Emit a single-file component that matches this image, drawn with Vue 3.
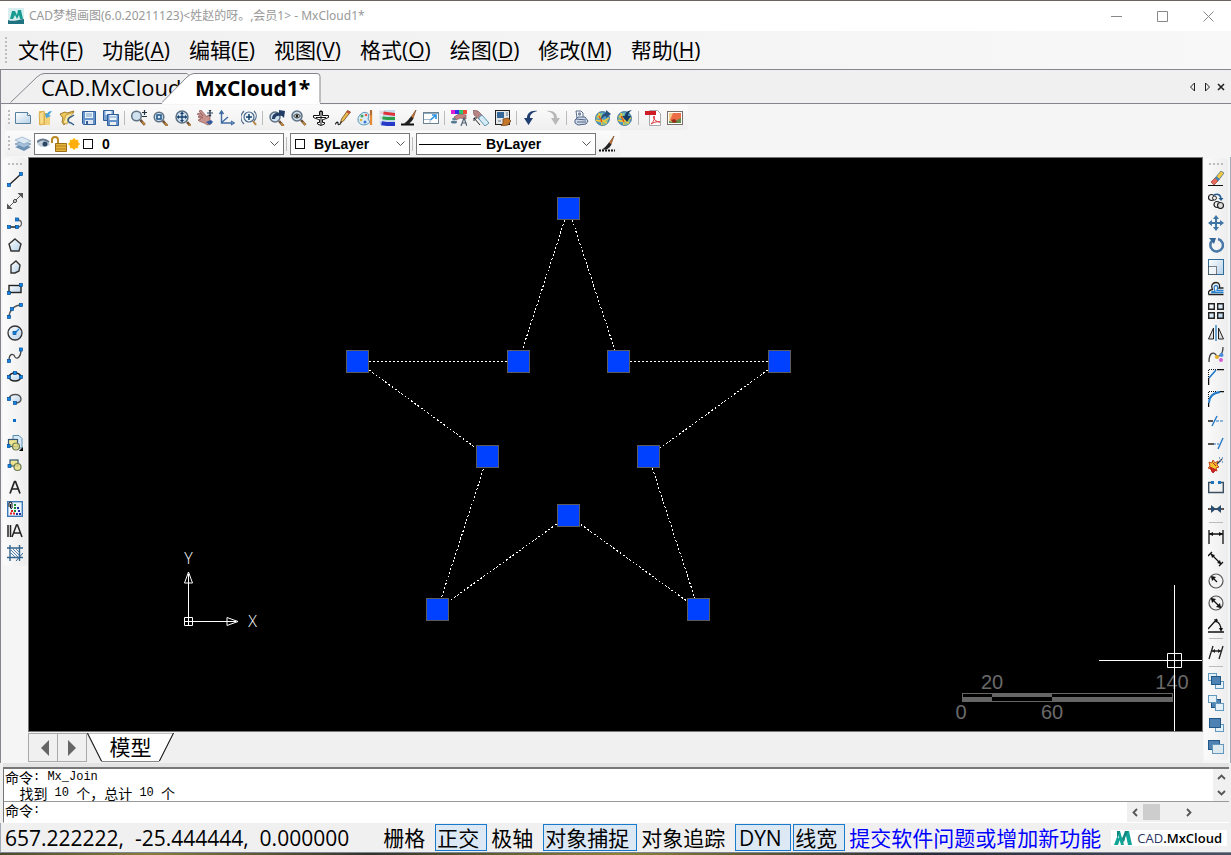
<script setup>
const menus = [
  ['文件', 'F'], ['功能', 'A'], ['编辑', 'E'], ['视图', 'V'],
  ['格式', 'O'], ['绘图', 'D'], ['修改', 'M'], ['帮助', 'H'],
]

const lens = (x, y, r) =>
  `<path d="M${x + r - 1} ${y + r - 1}l4.500 5" stroke="#6b5138" stroke-width="2.600"/><path d="M${x + r + 1} ${y + r + 1}l2.500 3" stroke="#c58a3d" stroke-width="1.600"/><circle cx="${x}" cy="${y}" r="${r}" fill="#cfe0ee" stroke="#5e7183" stroke-width="1.500"/>`
const dot = (x, y) => `<rect x="${x - 1.5}" y="${y - 1.5}" width="3" height="3" fill="#1188e6" stroke="#034b94" stroke-width=".7"/>`
const brush = '<path d="M15 0l-5 7 2 1.500z" fill="#d77a35" stroke="#623413" stroke-width=".6"/><path d="M10 6.500l2.500 2-2 3-6 2 3-4z" fill="#222"/>'
const globe =
  '<circle cx="7.500" cy="8.500" r="7" fill="#4d9bc9" stroke="#285a7b" stroke-width=".7"/><path d="M1 8c2-5 5-5 7-5l-2 5-3 1zM8 10l5-1c0 4-2 6-5 6z" fill="#8fc08a"/><path d="M2 6c3 1 5 5 5 9M1 10c4 2 9 1 13-2M4 3c0 5 4 9 8 10" stroke="#f4cb35" stroke-width="1.500" fill="none"/><path d="M4 6l3 6" stroke="#d74822" stroke-width="1.200"/>'
const back = (x, y) => `<rect x="${x}" y="${y}" width="8" height="7" fill="#e5f1f8" stroke="#6497bc"/>`
const front = (x, y, w = 9, h = 8) => `<rect x="${x}" y="${y}" width="${w}" height="${h}" fill="#4d82b3" stroke="#205887"/>`

const icons = {
  new: '<path d="M.5 2.500h12l3 3v8H.5z" fill="url(#paper)" stroke="#56809e"/><path d="M12.500 2.500v3h3" fill="#fff" stroke="#56809e"/>',
  open: '<path d="M2 1h5l1 2h3v12H2z" fill="#e9bc55"/><path d="M2 3l5-2v13l-4 1z" fill="#f8dc8c" stroke="#c79432" stroke-width=".6"/><path d="M8 6h5v9H8z" fill="#f1d17b"/><path d="M15 1c-3 0-4 1-5 3L8 3l1 5 5-2-2-1z" fill="#4aa4dc"/>',
  openlib: '<path d="M1 4l5-2 2 1 7-2-3 4-4 4-3 6-2-3 1-4z" fill="#efc85c" stroke="#a07928"/><path d="M4 13l3-8 8-3-4 5-3 7z" fill="#f9e59c" stroke="#b98e33" stroke-width=".8"/><path d="M12 7c-4 1-4 5 0 6l3 2M12 7l3-2" fill="none" stroke="#365f8b" stroke-width="1.500"/>',
  save: '<path d="M1.500 1.500h13v13h-12l-1-1z" fill="#6793cb" stroke="#2f5d98"/><rect x="4" y="2" width="8" height="6" fill="#e8f2fa"/><path d="M5 4h6M5 6h6" stroke="#78a0c8"/><rect x="4" y="10" width="8" height="4" fill="#dfe8f2"/><rect x="5" y="11" width="2" height="3" fill="#375f94"/>',
  saveall: '<path d="M.5.500h10v10H.5z" fill="#7aa2d2" stroke="#2f5d98"/><rect x="2.500" y="1" width="6" height="4" fill="#eaf4fc"/><path d="M4.500 4.500h11v11h-11z" fill="#6793cb" stroke="#2f5d98"/><rect x="6.500" y="5" width="7" height="5" fill="#eaf4fc"/><path d="M7 7h6" stroke="#6f9bca"/><rect x="7" y="12" width="6" height="3" fill="#eee"/>',
  zoom: lens(5.5, 6, 4.8) + '<path d="M13.500 0v5M11 2.500h5M11 6.500h5" stroke="#234" stroke-width="1.200"/>',
  zoomwin: lens(6, 7, 4.8) + '<rect x="4" y="5" width="4" height="4" fill="#dceaf5" stroke="#1e548a" stroke-width="1.500"/>',
  zoomext: lens(7, 7, 6) + '<path d="M7 3v8M3 7h8" stroke="#173f6b" stroke-width="1.300"/><path d="M7 1.500l2 2.500H5zM7 12.500L5 10h4zM1.500 7L4 5v4zM12.500 7L10 9V5z" fill="#173f6b"/>',
  pan: '<path d="M0 4l3-1 3 3-4-5 2-1 6 7 1-2 2 1v5l2 2-4 2-4-2-5-2-1-1 3-1-3-2 1-1 4 2z" fill="#c9928d" stroke="#8a5553" stroke-width=".7"/><path d="M9 12l5-2 2 2-3 3z" fill="#345b9b"/><path d="M13 0v6M10 3h6M12 1l1-1 1 1M12 5l1 1 1-1" stroke="#263b52" stroke-width="1.200" fill="none"/>',
  ucs: '<path d="M2.500 2v11H13M.5 4l2-3 2 3M12 11l3 2-3 2M2 13L9 7" fill="none" stroke="#3e6ba1" stroke-width="1.400"/>',
  zoomreal: '<circle cx="8" cy="7" r="5" fill="#edf5fb" stroke="#48698c" stroke-width="1.200"/><path d="M8 4v6M5 7h6" stroke="#153f69" stroke-width="1.500"/><path d="M3 1C-1 5-1 10 3 14M13 1c3 3 3 7 0 10" stroke="#536f8b" stroke-width="1.200" fill="none"/><path d="M12 11l3 4" stroke="#b68548" stroke-width="2"/>',
  zoomprev: lens(6, 7, 5) + '<path d="M3 9C3 4 7 2 10 3V0l6 1-1 7-2-2C9 5 6 6 6 9z" fill="#223e64"/>',
  zoomall: lens(6, 6, 5) + '<path d="M2.500 6Q6 2 9.500 6 6 10 2.500 6z" fill="#fff" stroke="#333"/><circle cx="6" cy="6" r="1.500" fill="#222"/>',
  plane: '<path d="M6.500 1.500h3v4h6v2l-5 2h-1v3h2v1.500l-3.500 1.500-3.500-1.500V12.500h2v-3h-1l-5-2v-2h6z" fill="#fff" stroke="#111"/><path d="M8 0v15M3 7.500h10" stroke="#111"/>',
  pencil: '<path d="M12.500.500l3 1.500-7 9-3 2 1-4z" fill="#e7b84b" stroke="#6f4b22" stroke-width=".8"/><path d="M0 14.500c2-3 3-3 3-1s1 1 3 0" stroke="#222" stroke-width="1.200" fill="none"/><path d="M12.500.500l3 1.500-1.500 2-2.500-2z" fill="#c14c36"/><path d="M6 11l-1 2.500 2-1.500z" fill="#222"/>',
  palette: '<path d="M3 5c3-4 8-3 9 0l-1 4 2 3c-4 5-12 3-12-2 0-2 0-3 2-5z" fill="#d9ecfa" stroke="#5793b8"/><circle cx="5" cy="6" r="1.500" fill="#43a357"/><circle cx="9" cy="5" r="1.300" fill="#e55b44"/><circle cx="4" cy="10" r="1.300" fill="#e4b638"/><circle cx="8" cy="12" r="1.500" fill="#3e77cc"/><path d="M14 1v14" stroke="#e58b38" stroke-width="2.300"/><path d="M13 0h2v5h-2z" fill="#b16c36"/>',
  layersrgb: '<path d="M0 0h16v16H0z" fill="#c6dbea"/><path d="M1 1l7 1 8 1v3L8 5 1 4z" fill="#e1323a"/><path d="M1 6l7 1h8v3H8L1 9z" fill="#2b9c47"/><path d="M1 11l7 1h8v4H8l-7-1z" fill="#2538c8"/><path d="M0 0h5L2 16H0z" fill="#eef5fa" fill-opacity=".8"/>',
  brushline: brush + '<path d="M0 14.500h13" stroke="#111" stroke-width="2"/><path d="M3 13.500l4-3 3 1-2 3z" fill="#222"/>',
  resize: '<rect x=".5" y="2.500" width="15" height="11" fill="#fff" stroke="#6b8293"/><path d="M1 3.500h14" stroke="#91aabd"/><path d="M1 9.500h6V13" fill="none" stroke="#a0b9cb"/><path d="M7.500 10L13 5M9 5h4v4" stroke="#2792df" stroke-width="1.600" fill="none"/>',
  colorfont: '<rect x="0" y="0" width="4" height="4" fill="#e11bd0"/><rect x="4" y="0" width="4" height="4" fill="#352bec"/><rect x="8" y="0" width="4" height="4" fill="#28c76d"/><rect x="12" y="0" width="4" height="4" fill="#ec4936"/><path d="M3 7l5-3 7 1v4L9 8l-4 2z" fill="#c98481" stroke="#68474b" stroke-width=".6"/><ellipse cx="3" cy="9" rx="2" ry="1" fill="#547b91"/><ellipse cx="3" cy="12" rx="3" ry="1.500" fill="#547b91"/><path d="M10 16l3-8 3 8M11 13h4" fill="none" stroke="#526174" stroke-width="1.200"/>',
  hand: '<path d="M0 0l5 1 5 5-3 4-6-5z" fill="#b78583" stroke="#704f50" stroke-width=".6"/><path d="M6 7l3-2 7 8-4 3-6-7z" fill="#d5ecf6" stroke="#6192ae"/><path d="M1 8l6 7M1 11V8h3" fill="none" stroke="#222"/>',
  props: '<rect x=".5" y=".5" width="14" height="14" fill="#e5e6e8" stroke="#222"/><rect x="2" y="2" width="7" height="6" fill="#356898"/><path d="M11 3h2M11 5h2M3 11h3" stroke="#607b92"/><path d="M8 9l5-1 3 3-3 4-7 1 2-3z" fill="#c57629" stroke="#633e1c" stroke-width=".7"/>',
  undo: '<path d="M14.500 1C7 0 4 4 4 8H1l4.500 7L10 8H7c0-4 3-6 7.500-7z" fill="#203e70"/>',
  redo: '<path d="M1.500 1C9 0 12 4 12 8h3l-4.500 7L6 8h3C9 4 6 2 1.500 1z" fill="#b8b8b8"/>',
  print: '<path d="M4 8L3 1h5l2 2v5" fill="#fff" stroke="#566987"/><path d="M2 10l3-3h7l3 4-2 3-8 1-3-2z" fill="#d3dcec" stroke="#4f6283"/><path d="M3 9l10 1M4 12l9 0" fill="none" stroke="#4f6283"/><circle cx="6.500" cy="4" r="1.700" fill="#758aab"/>',
  web: globe + '<path d="M6 10c0-5 3-7 5-7V0l5 4-5 4V6c-2 0-3 1-5 4z" fill="#28527d"/>',
  webdown: globe + '<path d="M15 0c-6 1-7 4-7 6H5l5 6 4-6h-3c0-2 1-4 4-6z" fill="#173d65"/>',
  pdf: '<path d="M4.500.500h8l3 3v12h-11z" fill="#fff" stroke="#aaa"/><rect x="0" y="1" width="11" height="4" fill="#cf1c25"/><path d="M6 14c4-4 4-7 3-8-2 3 3 6 6 6-4-1-7 1-9 2z" fill="none" stroke="#d9343a"/>',
  image: '<rect x=".5" y="1.500" width="15" height="13" fill="#fff" stroke="#776f68"/><rect x="2" y="3" width="12" height="10" fill="#f0cf8c"/><path d="M6 3h8v6l-7 3-4-2z" fill="#ec6f47"/><path d="M2 11l4 1 8-4v5H2z" fill="#628e49"/><path d="M4 10l4-1 2 3-4 1z" fill="#9c291e"/>',
  layers: '<path d="M0 11l7-3 9 3-7 4z" fill="#6c91b5"/><path d="M0 8l7-3 9 3-7 4z" fill="#a4bfd8" stroke="#587da1" stroke-width=".6"/><path d="M0 4l7-3 9 4-7 3z" fill="#dce8f2" stroke="#7f9fbd" stroke-width=".6"/>',
  brushdot: brush + '<path d="M3 13.500l4-3 3 1-2 2z" fill="#222"/><path d="M0 14.500h16" stroke="#111" stroke-width="2" stroke-dasharray="2 1"/>',

  line: '<path d="M2 14L14 3" stroke="#222" stroke-width="1.400"/>' + dot(2, 14) + dot(14, 3),
  xline: '<path d="M2 14L14 2" stroke="#555" fill="none"/><path d="M0 10.500V16h5.500zM10.500 0H16v5.500z" fill="#555"/><circle cx="8" cy="8" r="1.500" fill="#fff" stroke="#333"/>',
  pline: '<path d="M1 12h10" stroke="#111" stroke-width="1.400"/><path d="M10 12c6 0 6-7 0-7" stroke="#666" stroke-width="1.300" fill="none"/>' + dot(2, 12) + dot(10, 12) + dot(10, 4.5),
  polygon: '<path d="M8 2l6 5-2 7H4L2 7z" fill="url(#paper)" stroke="#333" stroke-width="1.400"/>',
  polygon2: '<path d="M9 2l4 4-1 6-4 2H4V6z" fill="url(#paper)" stroke="#333" stroke-width="1.400"/>',
  rect: '<rect x="2" y="4.500" width="12" height="7" fill="url(#paper)" stroke="#222" stroke-width="1.400"/>' + dot(2, 12) + dot(14, 4),
  arc: '<path d="M2 14C2 8 7 2 14 2" fill="none" stroke="#555" stroke-width="1.400"/>' + dot(2, 14) + dot(5, 6) + dot(14, 2),
  circle: '<circle cx="8" cy="8" r="7" fill="url(#paper)" stroke="#333" stroke-width="1.300"/><path d="M8 8l4-4" stroke="#1681d6" stroke-width="1.300"/>' + dot(7.5, 8),
  spline: '<path d="M2 14c0-9 5-7 6-4 2 3 6 0 6-7" fill="none" stroke="#444" stroke-width="1.300"/>' + dot(2, 14) + dot(14, 2.5),
  ellipse: '<ellipse cx="8" cy="8" rx="6" ry="4" fill="url(#paper)" stroke="#222" stroke-width="1.400"/>' + dot(8, 4) + dot(2, 8) + dot(14, 8),
  ellarc: '<path d="M2 8c1-6 12-6 12 0 0 3-3 4-6 4z" fill="url(#paper)"/><path d="M2 8c1-6 12-6 12 0 0 3-3 4-6 4" fill="none" stroke="#555" stroke-width="1.400"/>' + dot(2, 8) + dot(8, 12),
  point: '<rect x="6" y="6" width="3" height="3" fill="#0b6cc4"/>',
  insert: '<path d="M6 .500h6l3 3V13H6z" fill="#d8e9f6" stroke="#5689ad"/><rect x="1.500" y="4.500" width="9" height="7" fill="#f0e691" stroke="#335773" stroke-width="1.200"/><circle cx="9" cy="11.500" r="3.500" fill="#e8dd83" fill-opacity=".8" stroke="#6c7b52" stroke-width="1.200"/><path d="M16 12v4h-4z" fill="#000"/>' + dot(1.5, 11),
  block: '<rect x="3" y="3" width="8" height="6" fill="#f0e691" stroke="#335773" stroke-width="1.200"/><circle cx="10.500" cy="10" r="3.500" fill="#e8dd83" fill-opacity=".8" stroke="#6c7b52" stroke-width="1.200"/>' + dot(2.5, 9),
  text: '<path d="M3 14.500L7.500 2.500h1L13 14.500M4.500 10h7" fill="none" stroke="#222" stroke-width="1.700"/>',
  hatch: '<rect x=".7" y=".7" width="14.600" height="14.600" fill="#edf6ff" stroke="#3d78b6" stroke-width="1.400"/><path d="M7 4h2M7 7h2M7 10h2" stroke="#15882b" stroke-width="2"/><path d="M3 12.500h5M4 10h2" stroke="#e02020" stroke-width="2" stroke-dasharray="2 1"/><path d="M10 7h2M11 10h2M9 13h5" stroke="#20309f" stroke-width="2" stroke-dasharray="2 1"/><path d="M2 6V2q1.500-2 3 0v5q-1 1.500-1.500 0V3" stroke="#111" fill="none"/>',
  mtext: '<path d="M1 2v12M3.500 2v12M5 14l4.500-12h1L15 14M6.500 10h7" stroke="#222" stroke-width="1.500" fill="none"/>',
  region: '<path d="M3 0v16M12.500 0v16M0 3h16M0 12.500h16" stroke="#34658f" stroke-width="1.400"/><path d="M4 8l4 4M4 5l7 7M6 4l6 6M9 4l3 3" stroke="#5585ae"/><path d="M16 8l-7 8" stroke="#34658f"/>',

  erase: '<path d="M0 14.500h15" stroke="#111"/><path d="M3 11l3 3 4-4-3-3z" fill="#e86a5c" stroke="#9c4740" stroke-width=".8"/><path d="M7 7l3 3 6-8-3-2z" fill="#f1ca42" stroke="#54728a" stroke-width=".8"/><path d="M8 6l3 3" stroke="#3a81c0" stroke-width="2"/>',
  copy: '<circle cx="3.500" cy="4.500" r="3" fill="#eee" stroke="#222" stroke-width="1.200"/><circle cx="6.500" cy="5" r="2" fill="#eee" stroke="#333"/><circle cx="9" cy="11.500" r="3" fill="#eee" stroke="#222" stroke-width="1.200"/><circle cx="12.500" cy="12.500" r="3" fill="#ddd" stroke="#222" stroke-width="1.200"/><path d="M6 2c4-2 7 0 7 4" fill="none" stroke="#235b91" stroke-width="1.600"/><path d="M10.500 5h5L13 8z" fill="#235b91"/>',
  move: '<path d="M8 0l3 4H9v3h3V5l4 3-4 3V9H9v3h2l-3 4-3-4h2V9H4v2L0 8l4-3v2h3V4H5z" fill="#3e74a6"/>',
  rotate: '<path d="M5 3a6.300 6.300 0 1 0 5-1" fill="none" stroke="#4778a7" stroke-width="2.500"/><path d="M1 1l7 0-2 6z" fill="#346796"/>',
  scale: '<rect x=".5" y=".5" width="15" height="15" fill="url(#paper)" stroke="#2f6c9a"/><rect x=".5" y="7.500" width="8" height="8" fill="#eef4fa" stroke="#111" stroke-dasharray="1 1"/>',
  offset: '<path d="M.5 13.500V11q.5-2 4-2.500C2.500 4 5 1.500 8 1.500s4.500 3 3 5.500h4.500M.5 13.500h15" fill="none" stroke="#222" stroke-width="1.300"/><path d="M3 11.500q1-1 4-1C5.500 6 6 4.500 8 4.500s2 2 1 5h6.500M3 11.500h12.500" fill="none" stroke="#2b83cf" stroke-width="1.300"/>',
  array: '<path d="M.7.700h5.600v5.600H.7zM9.700.700h5.600v5.600H9.700zM.7 9.700h5.600v5.600H.7zM9.700 9.700h5.600v5.600H9.700z" fill="url(#paper)" stroke="#222" stroke-width="1.400"/>',
  mirror: '<path d="M5.500 3v11h-5z" fill="#ddd" stroke="#222"/><path d="M10.500 3v11h5z" fill="#ddd" stroke="#222"/><path d="M8 0v16" stroke="#3483bf" stroke-width="1.400"/>',
  editspline: '<path d="M1 15c0-9 4-11 7-7 2 3 7 0 7-8" fill="none" stroke="#444" stroke-width="1.300"/><circle cx="9" cy="10" r="2" fill="#e6ac2f"/><circle cx="13.500" cy="8" r="2" fill="#478bda"/><circle cx="13" cy="13" r="2" fill="#d45bd1"/>',
  chamfer: '<path d="M.5 16V9M9 .500h7" stroke="#111" stroke-width="1.500"/><path d="M.5 8V.500H9" fill="none" stroke="#111" stroke-dasharray="1 1"/><path d="M1 9l7-8" stroke="#2479c8" stroke-width="1.600"/>',
  fillet: '<path d="M.5 16v-4M11 .500h5" stroke="#111" stroke-width="1.500"/><path d="M.5 8V.500H9" fill="none" stroke="#111" stroke-dasharray="1 1"/><path d="M1 12C1 5 5 2 12 1" fill="none" stroke="#2479c8" stroke-width="1.800"/>',
  trim: '<path d="M0 8h5" stroke="#111" stroke-width="1.400"/><path d="M4 13l5-10" stroke="#2479c8" stroke-width="1.400"/><path d="M8 8h8" stroke="#2479c8" stroke-width="1.200" stroke-dasharray="3 1"/>',
  extend: '<path d="M0 9h6" stroke="#111" stroke-width="1.400"/><path d="M6 9h5" stroke="#2479c8" stroke-dasharray="2 1"/><path d="M10 14l5-11" stroke="#2479c8" stroke-width="1.400"/>',
  explode: '<path d="M1 5l3 1 1-3 2 3 3-2-1 4 2 2-3 1 1 3-3-1-2 2-1-3-3-1 2-2z" fill="#f5c52d" stroke="#c2471d"/><path d="M2 10l6 3-3 3zM5 6l3 3" fill="#d2292a" stroke="#b91e1e"/><path d="M9 7l5-5" stroke="#34424e" stroke-width="1.300"/><path d="M11 1h1M14 1h1M14 5h1M12 4h1" stroke="#5189b5" stroke-width="1.500"/>',
  break: '<path d="M3 3.500H.7v10h14.600v-10H13" fill="none" stroke="#3c5062" stroke-width="1.400"/><rect x="3" y="2" width="3" height="3" fill="#1d74ba"/><rect x="10" y="2" width="3" height="3" fill="#1d74ba"/>',
  join: '<path d="M0 8h16" stroke="#222" stroke-width="1.500"/><path d="M3 4l5 4-5 4zM13 4L8 8l5 4z" fill="#2a4e70"/>',
  dimlin: '<path d="M1 1v14M15 1v14M1 5h14" stroke="#111" stroke-width="1.300"/><path d="M1 5l4-2v4zM15 5l-4-2v4z" fill="#111"/>',
  dimalign: '<path d="M0 5l4-4M11 15l4-4M3 3l10 10" stroke="#111" stroke-width="1.300"/><path d="M3 3l1 4 3-3zM13 13l-1-4-3 3z" fill="#111"/>',
  dimrad: '<circle cx="8" cy="8" r="7" fill="#f3f3f3" stroke="#555" stroke-width="1.200"/><path d="M4 4l5 5" stroke="#111" stroke-width="1.300"/><path d="M3 3l1 5 4-4z" fill="#111"/>',
  dimdia: '<circle cx="8" cy="8" r="7" fill="#f3f3f3" stroke="#555" stroke-width="1.200"/><path d="M3 3l10 10" stroke="#111" stroke-width="1.300"/><path d="M3 3l1 5 4-4zM13 13l-1-5-4 4z" fill="#111"/>',
  dimang: '<path d="M0 15h16M0 12L9 2M8 4c4 2 5 5 5 9" fill="none" stroke="#111" stroke-width="1.300"/><path d="M6 2l4 1-2 3zM11 11l2 4 2-4z" fill="#111"/>',
  dimobl: '<path d="M1 14L5 1M11 14l4-13M4 6h9" stroke="#222" stroke-width="1.300"/><path d="M4 6l3-2v4zM13 6l-3-2v4z" fill="#222"/>',
  order1: back(.5, .5) + back(7.5, 8.5) + front(3.5, 3.5),
  order2: front(3.5, 4.5) + back(.5, .5) + back(7.5, 8.5),
  order3: back(7.5, 7.5) + front(1.5, 1.5, 11, 9),
  order4: front(.5, 1.5, 11, 9) + '<rect x="4.500" y="5.500" width="11" height="9" fill="#dceaf0" stroke="#6497bc"/>',
}

const topTools = [
  'new', 'open', 'openlib', 'save', 'saveall', '|',
  'zoom', 'zoomwin', 'zoomext', 'pan', 'ucs', 'zoomreal', '|',
  'zoomprev', 'zoomall', 'plane', 'pencil', 'palette', 'layersrgb', 'brushline', 'resize', '|',
  'colorfont', 'hand', 'props', '|', 'undo', 'redo', '|',
  'print', 'web', 'webdown', '|', 'pdf', 'image',
]
const drawTools = [
  'line', 'xline', 'pline', 'polygon', 'polygon2', 'rect', 'arc', 'circle', 'spline',
  'ellipse', 'ellarc', 'point', 'insert', 'block', 'text', 'hatch', 'mtext', 'region',
]
const editTools = [
  'erase', 'copy', 'move', 'rotate', 'scale', 'offset', 'array', 'mirror', 'editspline',
  'chamfer', 'fillet', 'trim', 'extend', 'explode', 'break', 'join', '|',
  'dimlin', 'dimalign', 'dimrad', 'dimdia', 'dimang', '|', 'dimobl', '|',
  'order1', 'order2', 'order3', 'order4',
]

const star = [
  [568, 208], [618, 361], [779, 361], [648, 456], [698, 609],
  [568, 515], [437, 609], [487, 456], [357, 361], [518, 361],
]
const starPath = star.map((p) => p.join(',')).join(' ')

const modes = [
  ['栅格', false], ['正交', true], ['极轴', false], ['对象捕捉', true],
  ['对象追踪', false], ['DYN', true], ['线宽', true],
]
</script>

<template>
  <div class="window">
    <svg class="defs" width="0" height="0" aria-hidden="true">
      <linearGradient id="paper" x1="0" y1="0" x2="1" y2="1">
        <stop offset="0" stop-color="#ffffff" />
        <stop offset="1" stop-color="#b4d0e8" />
      </linearGradient>
    </svg>

    <header class="titlebar">
      <svg class="app-icon" width="16" height="16" viewBox="0 0 16 16">
        <rect width="16" height="16" rx="1" fill="#d9eeee" />
        <path d="M2 11L4 3h3l2 4 1-5h3l2 9h-3l-1-4-2 4-2-4-2 4z" fill="#179c91" />
        <path d="M0 12c5 2 9 0 16-1v5H0z" fill="#1f7280" />
      </svg>
      <h1>CAD梦想画图(6.0.20211123)&lt;姓赵的呀。,会员1&gt; - MxCloud1*</h1>
      <div class="win-buttons">
        <button aria-label="最小化"><svg width="11" height="11"><path d="M0 5.500h11" /></svg></button>
        <button aria-label="最大化"><svg width="11" height="11"><path d="M.5.500h10v10H.5z" /></svg></button>
        <button aria-label="关闭"><svg width="11" height="11"><path d="M.5.500l10 10M10.500.500l-10 10" /></svg></button>
      </div>
    </header>

    <nav class="menubar">
      <i class="grip tall"></i>
      <button v-for="m in menus" :key="m[1]">{{ m[0] }}(<u>{{ m[1] }}</u>)</button>
    </nav>

    <div class="tabs">
      <button class="tab back">
        <svg width="190" height="30"><path d="M.5 29.500L27 4q4-3.500 7-3.500h143l6 6" /></svg>
        <span>CAD.MxCloud</span>
      </button>
      <button class="tab front">
        <svg width="159" height="31"><path d="M0 29.500L25 4q4-3.500 7-3.500h123q3 0 3 3V31H0z" class="fill" /><path d="M0 29.500L25 4q4-3.500 7-3.500h123q3 0 3 3v26" /></svg>
        <span>MxCloud1*</span>
      </button>
      <div class="tab-nav">
        <button aria-label="向左"><svg width="8" height="10"><path d="M5.500 1v8l-4-4z" /></svg></button>
        <button aria-label="向右"><svg width="8" height="10"><path d="M2.500 1v8l4-4z" /></svg></button>
        <button aria-label="关闭标签"><svg width="8" height="10"><path d="M1 2l6 6M7 2l-6 6" class="cross" /></svg></button>
      </div>
    </div>

    <div class="bars">
      <div class="bar">
        <i class="grip"></i>
        <template v-for="(t, i) in topTools" :key="i">
          <i v-if="t === '|'" class="vsep"></i>
          <button v-else class="tool" :aria-label="t"><svg width="16" height="16" viewBox="0 0 16 16" fill="none" v-html="icons[t]" /></button>
        </template>
      </div>
      <div class="bar second">
        <i class="grip"></i>
        <button class="tool" aria-label="layers"><svg width="16" height="16" viewBox="0 0 16 16" v-html="icons.layers" /></button>
        <label class="combo layer">
          <svg width="60" height="18" viewBox="0 0 60 18">
            <path d="M0 7q5-5 12 0l1 3q-7 4-12 0z" fill="#c3d0dc" />
            <path d="M0 7q6-5 12 0" stroke="#66788c" stroke-width="1.800" fill="none" />
            <circle cx="8" cy="9" r="2.500" fill="#2c4763" />
            <path d="M15 8V5q0-3 3-3t3 3v4" fill="none" stroke="#b98a25" stroke-width="2" />
            <path d="M18.500 8.500h11v8h-11z" fill="#e6b43c" stroke="#9b6e18" />
            <path d="M19 11h10M19 14h10" stroke="#b07c1c" />
            <path d="M37 3v12M31 9h12M33 5l8 8M41 5l-8 8" stroke="#ffcf21" stroke-width="1.500" />
            <circle cx="37" cy="9" r="4.800" fill="#ffae0b" />
            <rect x="46.500" y="4.500" width="9" height="9" fill="#fff" stroke="#111" />
          </svg>
          <select aria-label="图层"><option>0</option></select>
          <svg class="chev" width="9" height="6"><path d="M.5.500l4 4 4-4" /></svg>
        </label>
        <i class="vsep"></i>
        <label class="combo color">
          <svg width="17" height="18"><rect x="2.500" y="4.500" width="9" height="9" fill="#fff" stroke="#111" /></svg>
          <select aria-label="颜色"><option>ByLayer</option></select>
          <svg class="chev" width="9" height="6"><path d="M.5.500l4 4 4-4" /></svg>
        </label>
        <i class="vsep"></i>
        <label class="combo ltype">
          <svg width="63" height="18"><path d="M0 9.500h62" stroke="#000" /></svg>
          <select aria-label="线型"><option>ByLayer</option></select>
          <svg class="chev" width="9" height="6"><path d="M.5.500l4 4 4-4" /></svg>
        </label>
        <button class="tool" aria-label="brush"><svg width="16" height="16" viewBox="0 0 16 16" v-html="icons.brushdot" /></button>
      </div>
    </div>

    <main class="work">
      <aside class="side">
        <div class="strip">
          <i class="grip flat"></i>
          <button v-for="t in drawTools" :key="t" class="tool" :aria-label="t"><svg width="16" height="16" viewBox="0 0 16 16" v-html="icons[t]" /></button>
        </div>
      </aside>

      <section class="center">
        <div class="canvas">
          <svg width="100%" height="100%">
            <g transform="translate(-29,-158)">
              <g shape-rendering="crispEdges">
                <polygon :points="starPath" transform="translate(.5,.5)" fill="none" stroke="#fff" stroke-dasharray="2 2" />
                <rect v-for="(p, i) in star" :key="i" :x="p[0] - 11" :y="p[1] - 11" width="22" height="22" transform="translate(.5,.5)" fill="#0040ff" stroke="#5c5c5c" />
              </g>
              <g fill="none" stroke="#fff">
                <path d="M184.500 617.500h8v8h-8zM184 621.500h43M188.500 626v-43M188.500 572l-4 11h8zM188.500 574v9M238 621.500l-11-4v8zM227 621.500h9" />
              </g>
              <text x="188.500" y="564" class="axis">Y</text>
              <text x="252.500" y="627" class="axis">X</text>
              <g fill="#666" shape-rendering="crispEdges">
                <rect x="962" y="693" width="211" height="9" />
                <path d="M963 694h29v3h-29zM1052 694h120v3h-120zM992 697h60v4h-60z" fill="#000" />
              </g>
              <g class="scale">
                <text x="992" y="689">20</text>
                <text x="1172" y="689">140</text>
                <text x="961" y="719">0</text>
                <text x="1052" y="719">60</text>
              </g>
              <path d="M1099 660.500h104M1174.500 585v147M1167.500 653.500h14v14h-14z" fill="none" stroke="#fff" />
            </g>
          </svg>
        </div>
        <div class="sheets">
          <button class="arrow" aria-label="上一页"><svg width="8" height="16"><path d="M8 0v16L0 8z" /></svg></button>
          <button class="arrow" aria-label="下一页"><svg width="8" height="16"><path d="M0 0v16l8-8z" /></svg></button>
          <button class="sheet">
            <svg width="87" height="29"><path d="M0 0l14.500 28.500H72L86.500 0z" /><path d="M.5 0l14 28M72.500 28l14-28" class="edge" /></svg>
            <span>模型</span>
          </button>
        </div>
      </section>

      <aside class="side right">
        <div class="strip">
          <i class="grip flat"></i>
          <template v-for="(t, i) in editTools" :key="i">
            <i v-if="t === '|'" class="hsep"></i>
            <button v-else class="tool" :aria-label="t"><svg width="16" height="16" viewBox="0 0 16 16" fill="none" v-html="icons[t]" /></button>
          </template>
        </div>
      </aside>
    </main>

    <section class="command">
      <div class="log">
        <div class="lines">
          <p>命令<b>:&nbsp;Mx_Join</b></p>
          <p><b>&nbsp;&nbsp;</b>找到<b>&nbsp;10&nbsp;</b>个，总计<b>&nbsp;10&nbsp;</b>个</p>
        </div>
        <div class="vscroll">
          <svg width="9" height="6"><path d="M1 5l3.500-3.500L8 5" /></svg>
          <svg width="9" height="6"><path d="M1 1l3.500 3.500L8 1" /></svg>
        </div>
      </div>
      <div class="prompt">
        <label for="cmd">命令<b>:</b></label>
        <input id="cmd" type="text" />
        <div class="hscroll">
          <svg width="6" height="9"><path d="M5 1L1.500 4.500 5 8" /></svg>
          <i></i>
          <svg width="6" height="9"><path d="M1 1l3.500 3.500L1 8" /></svg>
        </div>
      </div>
    </section>

    <footer class="status">
      <span class="coords">657.222222,&nbsp; -25.444444,&nbsp; 0.000000</span>
      <button v-for="m in modes" :key="m[0]" class="mode" :class="{ on: m[1], short: m[0] === 'DYN' }">{{ m[0] }}</button>
      <a href="#">提交软件问题或增加新功能</a>
      <span class="brand">
        <svg width="18" height="16" viewBox="0 0 18 16">
          <path d="M0 15l3-8 3 2-2 6zM3 1h3l4 14H7zM8 7l3 2-1 3zM11 1h4l3 14h-4z" fill="#10a597" />
          <path d="M3 1h3L3 9zM11 1h3L9 13 8 9z" fill="#12877f" />
        </svg>
        <span><em>CAD</em>.MxCloud</span>
      </span>
    </footer>
    <div class="desktop"></div>
  </div>
</template>

<style>
body { background: #f0f0f0; }
</style>

<style scoped>
.window {
  min-height: 100vh;
  box-sizing: border-box;
  display: flex;
  flex-direction: column;
  border-top: 1px solid #6b6360;
  background: #f0f0f0;
  color: #000;
  font-family: "Open Sans", "Noto Sans", "Noto Sans CJK SC", sans-serif;
  font-size: 21px;
  overflow: hidden;
}
.defs { position: absolute; }
button {
  border: 0;
  padding: 0;
  margin: 0;
  background: none;
  color: inherit;
  font: inherit;
}
svg { display: block; flex: none; }

.titlebar { display: flex; align-items: center; height: 30px; padding-left: 8px; background: #fff; }
.titlebar h1 { flex: 1; margin: 0 0 0 5px; font: 400 12px/16px "Noto Sans", "Noto Sans CJK SC", sans-serif; color: #999; white-space: nowrap; }
.win-buttons { display: flex; }
.win-buttons button { width: 46px; height: 30px; display: grid; place-items: center; }
.win-buttons path { fill: none; stroke: #888; }

.menubar { display: flex; align-items: center; height: 38px; gap: 19px; padding-left: 5px; background: linear-gradient(90deg, #f0f0f0, #f8f8f8); border-bottom: 1px solid #85858f; }
.menubar button { line-height: 30px; white-space: nowrap; }
.menubar .grip { margin-right: -9px; }
u { text-underline-offset: 2px; text-decoration-thickness: 1px; }

.grip { flex: none; width: 3px; height: 16px; background: repeating-linear-gradient(180deg, #bdbdbd 0 2px, transparent 2px 4px); background-size: 2px 100%; background-repeat: no-repeat; }
.grip.tall { height: 26px; }
.grip.flat { width: 14px; height: 2px; background: repeating-linear-gradient(90deg, #bdbdbd 0 2px, transparent 2px 4px); margin: 5px 0 3px; }

.tabs { display: flex; align-items: flex-end; height: 33px; border-bottom: 1px solid #85858f; border-left: 1px solid #85858f; padding-left: 9px; font-size: 22px; }
.tab { display: grid; text-align: left; height: 30px; }
.tab > * { grid-area: 1 / 1; }
.tab span { line-height: 28px; white-space: nowrap; }
.tab path { fill: none; stroke: #85858f; }
.tab path.fill { fill: #fff; stroke: none; }
.tab.back { width: 152px; }
.tab.back span { padding-left: 31px; }
.tab.front { position: relative; font-weight: 700; font-size: 21px; height: 31px; margin-bottom: -1px; }
.tab.front span { padding-left: 33px; line-height: 30px; }
.tab-nav { margin-left: auto; display: flex; align-items: center; gap: 6px; height: 33px; padding-right: 6px; }
.tab-nav path { fill: none; stroke: #222; }
.tab-nav .cross { stroke-width: 1.600; }

.bars { display: flex; flex-direction: column; align-items: flex-start; gap: 1px; background: #f5f5f5; border-left: 1px solid #85858f; padding: 1px 0 0 4px; height: 52px; }
.bar { display: flex; align-items: center; height: 25px; padding: 0 2px 0 3px; border-radius: 3px; background: linear-gradient(180deg, #fbfbfb, #efefef); }
.tool { flex: none; width: 22px; height: 22px; display: grid; place-items: center; }
.bar .grip + .tool { margin-left: 1px; }
.vsep { flex: none; width: 1px; height: 14px; margin: 0 3px 0 2px; background: #bbb; }
.combo { display: flex; align-items: center; box-sizing: border-box; height: 22px; border: 1px solid #777; background: #fff; padding: 0 4px 0 2px; }
.combo select { flex: 1; min-width: 0; appearance: none; border: 0; outline: 0; background: none; color: #000; font: 700 14px/20px "Liberation Sans", Arial, sans-serif; padding: 0 0 0 4px; }
.combo.layer { width: 250px; }
.combo.layer select { padding-left: 5px; }
.combo.color { width: 120px; }
.combo.ltype { width: 180px; }
.chev path { fill: none; stroke: #555; }

.work { flex: 1; display: flex; min-height: 0; border-left: 1px solid #85858f; }
.side { flex: none; width: 27px; box-sizing: border-box; padding: 1px 1px 0 2px; background: #f5f5f5; }
.side.right { width: 28px; padding: 1px 2px 3px 1px; border-right: 1px solid #a4abb8; }
.strip { display: flex; flex-direction: column; align-items: center; padding-bottom: 2px; border-radius: 4px; background: linear-gradient(90deg, #fbfbfb, #ededed); }
.hsep { width: 14px; height: 1px; margin: 2px 0 3px; background: #bbb; }
.center { flex: 1; min-width: 0; display: flex; flex-direction: column; }
.canvas { flex: 1; min-height: 0; border: 1px solid #777; background: #000; display: flex; }
.canvas svg { flex: 1; }
.axis { fill: #fff; font: 300 16px "Open Sans", "Noto Sans", sans-serif; text-anchor: middle; }
.scale text { fill: #6a6a6a; font: 20px "Liberation Sans", Arial, sans-serif; text-anchor: middle; }

.sheets { flex: none; display: flex; height: 31px; padding-top: 1px; box-sizing: border-box; }
.arrow { width: 30px; height: 29px; box-sizing: border-box; border: 1px solid #aaa; display: grid; place-items: center; padding-left: 3px; }
.arrow + .arrow { border-left: 0; width: 29px; padding: 0; }
.arrow path { fill: #666; }
.sheet { display: grid; height: 29px; }
.sheet > * { grid-area: 1 / 1; }
.sheet span { line-height: 28px; text-align: center; }
.sheet path { fill: #fff; stroke: #888; }
.sheet path.edge { fill: none; stroke: #111; }

.command { margin: 0 2px 0 3px; border-top: 4px solid #e3e3e3; font: 14px/16px "Noto Sans CJK SC", sans-serif; }
.command b { font: 12px/16px "Liberation Mono", monospace; }
.log { display: flex; height: 35px; border-top: 2px solid #777; border-left: 1px solid #777; border-bottom: 1px solid #999; background: #fff; box-sizing: border-box; }
.lines { flex: 1; padding-left: 1px; }
.lines p, .prompt label { display: flex; height: 16px; margin: 0; }
.vscroll { width: 16px; background: #f0f0f0; display: flex; flex-direction: column; align-items: center; justify-content: space-around; }
.vscroll path, .hscroll path { fill: none; stroke: #555; stroke-width: 1.800; }
.prompt { display: flex; height: 20px; border-left: 1px solid #777; background: #fff; border-bottom: 1px solid #fff; }
.prompt label { padding-left: 1px; }
.prompt input { flex: 1; min-width: 0; border: 0; outline: 0; padding: 0 4px; background: none; font: 12px "Liberation Mono", monospace; }
.hscroll { display: flex; align-items: center; width: 60px; padding: 0 37px 0 5px; background: #f0f0f0; }
.hscroll i { width: 17px; height: 16px; background: #cdcdcd; margin: 0 auto 0 5px; }

.status { display: flex; align-items: center; height: 29px; gap: 2px; padding: 0 4px; border-bottom: 1px solid #7d8794; border-left: 1px solid #a4abb8; line-height: 24px; white-space: nowrap; }
.coords { flex: 1; }
.mode { box-sizing: border-box; height: 27px; border: 1px solid transparent; padding: 0 7px 0 1px; line-height: 24px; }
.mode.on { border-color: #1979ca; background: #dce9f5; }
.mode.short { min-width: 56px; }
.status a { color: #00f; text-decoration: none; padding: 0 8px 0 2px; }
.brand { display: flex; align-items: center; gap: 5px; background: #fff; height: 16px; padding: 0 5px 0 3px; font: 600 13px/16px "Open Sans", "Noto Sans", sans-serif; }
.brand em { font-style: normal; font-weight: 500; color: #2b3462; }
.desktop { height: 3px; background: linear-gradient(90deg, #4a4a2c, #8a7c3a 12%, #33332c 30%, #8e8234 50%, #2b2b36 75%, #4a5160); }
</style>
